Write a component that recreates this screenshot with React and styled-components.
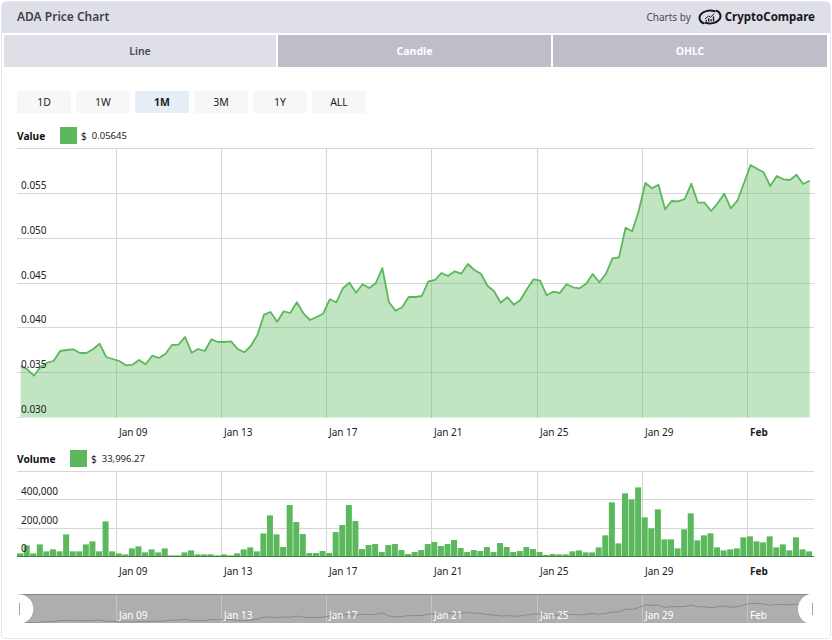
import React from "react";
import styled, { createGlobalStyle } from "styled-components";

const FONT = `"Noto Sans", "Open Sans", "Liberation Sans", sans-serif`;

const GlobalStyle = createGlobalStyle`
  html, body { margin: 0; padding: 0; background: #fff; }
  body { font-family: ${FONT}; }
`;

const Panel = styled.div`
  box-sizing: border-box;
  width: 830px;
  height: 638px;
  margin: 1px 0 0 1px;
  border: 1px solid #e3e8f0;
  border-radius: 5px;
  overflow: hidden;
  display: flex;
  flex-direction: column;
  background: #fff;
`;

const Header = styled.header`
  flex: none;
  height: 31px;
  display: flex;
  align-items: center;
  justify-content: space-between;
  padding: 0 15px 2px;
  box-sizing: border-box;
  background: #dfdfe8;
`;

const Title = styled.h1`
  margin: 0;
  font-size: 12px;
  font-weight: 600;
  color: #3f3f46;
`;

const Credit = styled.div`
  display: flex;
  align-items: center;
  font-size: 10px;
  color: #4a4a50;
`;

const Brand = styled.span`
  font-size: 11.5px;
  font-weight: 700;
  color: #17171a;
`;

const LogoMark = styled.svg`
  width: 24px;
  height: 16px;
  margin: 0 3px 0 7px;
`;

const Tabs = styled.div`
  flex: none;
  display: grid;
  grid-template-columns: 272px 273px 274px;
  gap: 2px;
  margin: 2px 2px 0;
  height: 32px;
`;

const Tab = styled.div`
  display: flex;
  align-items: center;
  justify-content: center;
  font-size: 10.5px;
  font-weight: ${(p) => (p.$active ? 600 : 700)};
  color: ${(p) => (p.$active ? "#4a4a52" : "#fff")};
  background: ${(p) => (p.$active ? "#dfdfe8" : "#bebec9")};
`;

const Ranges = styled.div`
  flex: none;
  display: flex;
  gap: 5px;
  margin: 24px 0 0 15px;
`;

const RangeButton = styled.div`
  width: 54px;
  height: 22px;
  display: flex;
  align-items: center;
  justify-content: center;
  font-size: 10.5px;
  font-weight: ${(p) => (p.$active ? 700 : 400)};
  color: #222;
  background: ${(p) => (p.$active ? "#e6eef7" : "#f7f7f7")};
`;

const Legend = styled.div`
  flex: none;
  height: 17px;
  display: flex;
  align-items: center;
  margin: ${(p) => p.$top}px 0 0 15px;
  font-size: 9.5px;
  color: #222;
`;

const LegendName = styled.span`
  width: ${(p) => p.$width}px;
  font-size: 10.2px;
  font-weight: 700;
  color: #111;
`;

const Swatch = styled.span`
  width: 17px;
  height: 17px;
  margin-right: 4px;
  background: #5cb85c;
`;

const Currency = styled.span`
  font-size: 10px;
  margin-right: 5px;
`;

const Plot = styled.svg`
  flex: none;
  display: block;
  margin: ${(p) => p.$top}px 0 0 15px;
  width: ${(p) => p.$w}px;
  height: ${(p) => p.$h}px;
  font-family: ${FONT};
`;

const X0 = 20.7;
const STEP = 6.575;

const LINE = [
  366, 369.3, 375.7, 367.3, 362.7, 361, 351, 350, 349.3, 353, 353, 349.3, 343.7, 357, 359, 361, 365.3, 364.7, 360, 364.3,
  355.7, 358, 354, 345, 344.7, 337, 352.7, 349, 351, 339.3, 342, 342, 341.3, 349, 352.3, 346, 335, 314.7, 312, 321.7,
  311.3, 313, 302.3, 313.3, 320, 317, 313.7, 299.3, 302.3, 288.3, 282.7, 292.7, 284.3, 288, 283.3, 268, 302, 310.7, 307.3, 297,
  297, 296, 281.3, 280, 273, 276, 271.3, 273.7, 264, 270, 273.7, 285.7, 291.3, 302.7, 297.3, 304.7, 300, 289, 279.3, 280.7,
  295.3, 291.7, 293, 284.3, 287.3, 288.3, 283.7, 274, 282.3, 274, 258.3, 257.3, 227.7, 231.3, 210.7, 183, 188.3, 184.7, 209.3, 201,
  201.3, 199, 183.7, 202.7, 202.7, 211, 203.3, 193.7, 208.3, 200.7, 183.3, 165, 168.7, 172.3, 186, 176, 179.3, 180, 174.7, 184, 180.7,
];

const VOLUME = [
  10, 34, 10, 37, 16, 22, 16, 67, 16, 16, 37, 46, 16, 106, 16, 10, 7, 25, 31, 13,
  22, 13, 25, 4, 4, 13, 19, 7, 7, 7, 4, 7, 4, 10, 22, 28, 16, 70, 124, 67,
  29, 155, 104, 68, 11, 11, 17, 11, 74, 95, 155, 107, 23, 35, 38, 14, 35, 38, 20, 8,
  14, 20, 38, 44, 32, 38, 50, 26, 14, 20, 17, 29, 14, 41, 29, 14, 17, 29, 23, 14,
  5, 8, 7, 7, 16, 19, 13, 13, 28, 64, 163, 40, 190, 172, 208, 118, 85, 142, 52, 52,
  25, 82, 130, 49, 64, 70, 28, 19, 22, 25, 58, 61, 46, 43, 61, 28, 37, 19, 58, 22, 16,
];

const xAt = (i) => X0 + i * STEP;
const linePoints = LINE.map((y, i) => `${xAt(i).toFixed(2)},${y}`).join(" ");
const areaPath = `M${xAt(0)},417.5 L${linePoints.replace(/ /g, " L")} L${xAt(120).toFixed(2)},417.5 Z`;
const navPoints = LINE.map((y, i) => `${xAt(i).toFixed(2)},${(622 - (366 - y) * 0.093).toFixed(2)}`).join(" ");

const GRID_X = [116.5, 221.5, 326.5, 431.5, 537.5, 642.5, 747.5];
const DATES = ["Jan 09", "Jan 13", "Jan 17", "Jan 21", "Jan 25", "Jan 29", "Feb"];
const PRICE_GRID = [148.5, 193.5, 238.5, 283.5, 327.5, 372.5];
const PRICE_LABELS = [
  ["0.055", 189],
  ["0.050", 233.5],
  ["0.045", 278.5],
  ["0.040", 323],
  ["0.035", 368],
  ["0.030", 413],
];
const VOL_GRID = [471.5, 499.5, 528.5];
const VOL_LABELS = [
  ["400,000", 495],
  ["200,000", 524],
  ["0", 552],
];
const GRID = "#d6d6d6";
const INK = "#222";
const GREEN = "#5cb85c";

function DateLabels({ y, fill, boldFeb }) {
  return DATES.map((d, i) => (
    <text
      key={d}
      x={GRID_X[i] + 2.5}
      y={y}
      fontSize="10"
      fill={fill}
      fontWeight={d === "Feb" && boldFeb ? 700 : 400}
    >
      {d}
    </text>
  ));
}

function PriceChart() {
  return (
    <Plot $top={4} $w={797} $h={292} viewBox="17 148 797 292">
      {PRICE_GRID.map((y) => (
        <line key={y} x1="17" x2="814" y1={y} y2={y} stroke={GRID} />
      ))}
      <line x1="17" x2="21" y1="417.5" y2="417.5" stroke={GRID} />
      {GRID_X.map((x) => (
        <line key={x} x1={x} x2={x} y1="148" y2="418" stroke={GRID} />
      ))}
      <path d={areaPath} fill={GREEN} fillOpacity="0.38" />
      <polyline points={linePoints} fill="none" stroke={GREEN} strokeWidth="1.8" strokeLinejoin="round" />
      {PRICE_LABELS.map(([t, y]) => (
        <text key={t} x="21" y={y} fontSize="10" fill={INK}>
          {t}
        </text>
      ))}
      <DateLabels y={436} fill={INK} boldFeb />
    </Plot>
  );
}

function VolumeChart() {
  return (
    <Plot $top={4} $w={797} $h={106} viewBox="17 471 797 106">
      {VOL_GRID.map((y) => (
        <line key={y} x1="17" x2="814" y1={y} y2={y} stroke={GRID} />
      ))}
      {GRID_X.map((x) => (
        <line key={x} x1={x} x2={x} y1="471" y2="557" stroke={GRID} />
      ))}
      {VOLUME.map((h, i) => (
        <rect key={i} x={xAt(i) - 3.6} y={556.7 - h / 3} width="6" height={h / 3} fill={GREEN} />
      ))}
      <line x1="17" x2="814" y1="556.5" y2="556.5" stroke="#3f7f3f" strokeWidth="1" />
      {VOL_LABELS.map(([t, y]) => (
        <text key={t} x="21" y={y} fontSize="10" fill={INK}>
          {t}
        </text>
      ))}
      <DateLabels y={575} fill={INK} boldFeb />
    </Plot>
  );
}

function Navigator() {
  return (
    <Plot $top={17} $w={797} $h={29} viewBox="17 594 797 29">
      <rect x="17" y="594" width="797" height="29" fill="#aeaeae" />
      <line x1="17" x2="814" y1="594.5" y2="594.5" stroke="#858585" />
      {GRID_X.map((x) => (
        <line key={x} x1={x} x2={x} y1="595" y2="623" stroke="#c4c4c4" />
      ))}
      <polyline points={navPoints} fill="none" stroke="#8a8a8a" strokeWidth="1" />
      <DateLabels y={619} fill="#ffffff" />
      <circle cx="18.5" cy="609" r="14.8" fill="#fff" />
      <circle cx="813.5" cy="609" r="15.5" fill="#fff" />
      <line x1="19.5" x2="19.5" y1="603" y2="615" stroke="#a5a5a5" />
      <line x1="812.5" x2="812.5" y1="603" y2="615" stroke="#a5a5a5" />
    </Plot>
  );
}

function Logo() {
  return (
    <LogoMark viewBox="0 0 24 16" aria-hidden="true">
      <g fill="none" stroke="#17171a" strokeLinecap="round">
        <path d="M16.5 2.2C12 0.6 5.5 1.8 2.6 5.6 0.5 8.6 1.6 13 5.6 14.2" strokeWidth="2" />
        <path d="M7.6 13.8C12 15.4 18.5 14.2 21.4 10.4 23.5 7.4 22.4 3 18.4 1.8" strokeWidth="2" />
        <path d="M7.5 9.5 10.5 7 12.5 8.2 16 4.8" strokeWidth="1" />
      </g>
      <g fill="#17171a">
        <rect x="7.6" y="10.8" width="1.4" height="1.6" />
        <rect x="10" y="9.4" width="1.4" height="3" />
        <rect x="12.4" y="10.2" width="1.4" height="2.2" />
        <rect x="14.8" y="7.4" width="1.4" height="5" />
      </g>
    </LogoMark>
  );
}

export default function App() {
  return (
    <>
      <GlobalStyle />
      <Panel>
        <Header>
          <Title>ADA Price Chart</Title>
          <Credit>
            Charts by
            <Logo />
            <Brand>CryptoCompare</Brand>
          </Credit>
        </Header>
        <Tabs>
          <Tab $active>Line</Tab>
          <Tab>Candle</Tab>
          <Tab>OHLC</Tab>
        </Tabs>
        <Ranges>
          {["1D", "1W", "1M", "3M", "1Y", "ALL"].map((r) => (
            <RangeButton key={r} $active={r === "1M"}>
              {r}
            </RangeButton>
          ))}
        </Ranges>
        <Legend $top={14}>
          <LegendName $width={43}>Value</LegendName>
          <Swatch />
          <Currency>$</Currency>
          0.05645
        </Legend>
        <PriceChart />
        <Legend $top={10}>
          <LegendName $width={53}>Volume</LegendName>
          <Swatch />
          <Currency>$</Currency>
          33,996.27
        </Legend>
        <VolumeChart />
        <Navigator />
      </Panel>
    </>
  );
}
